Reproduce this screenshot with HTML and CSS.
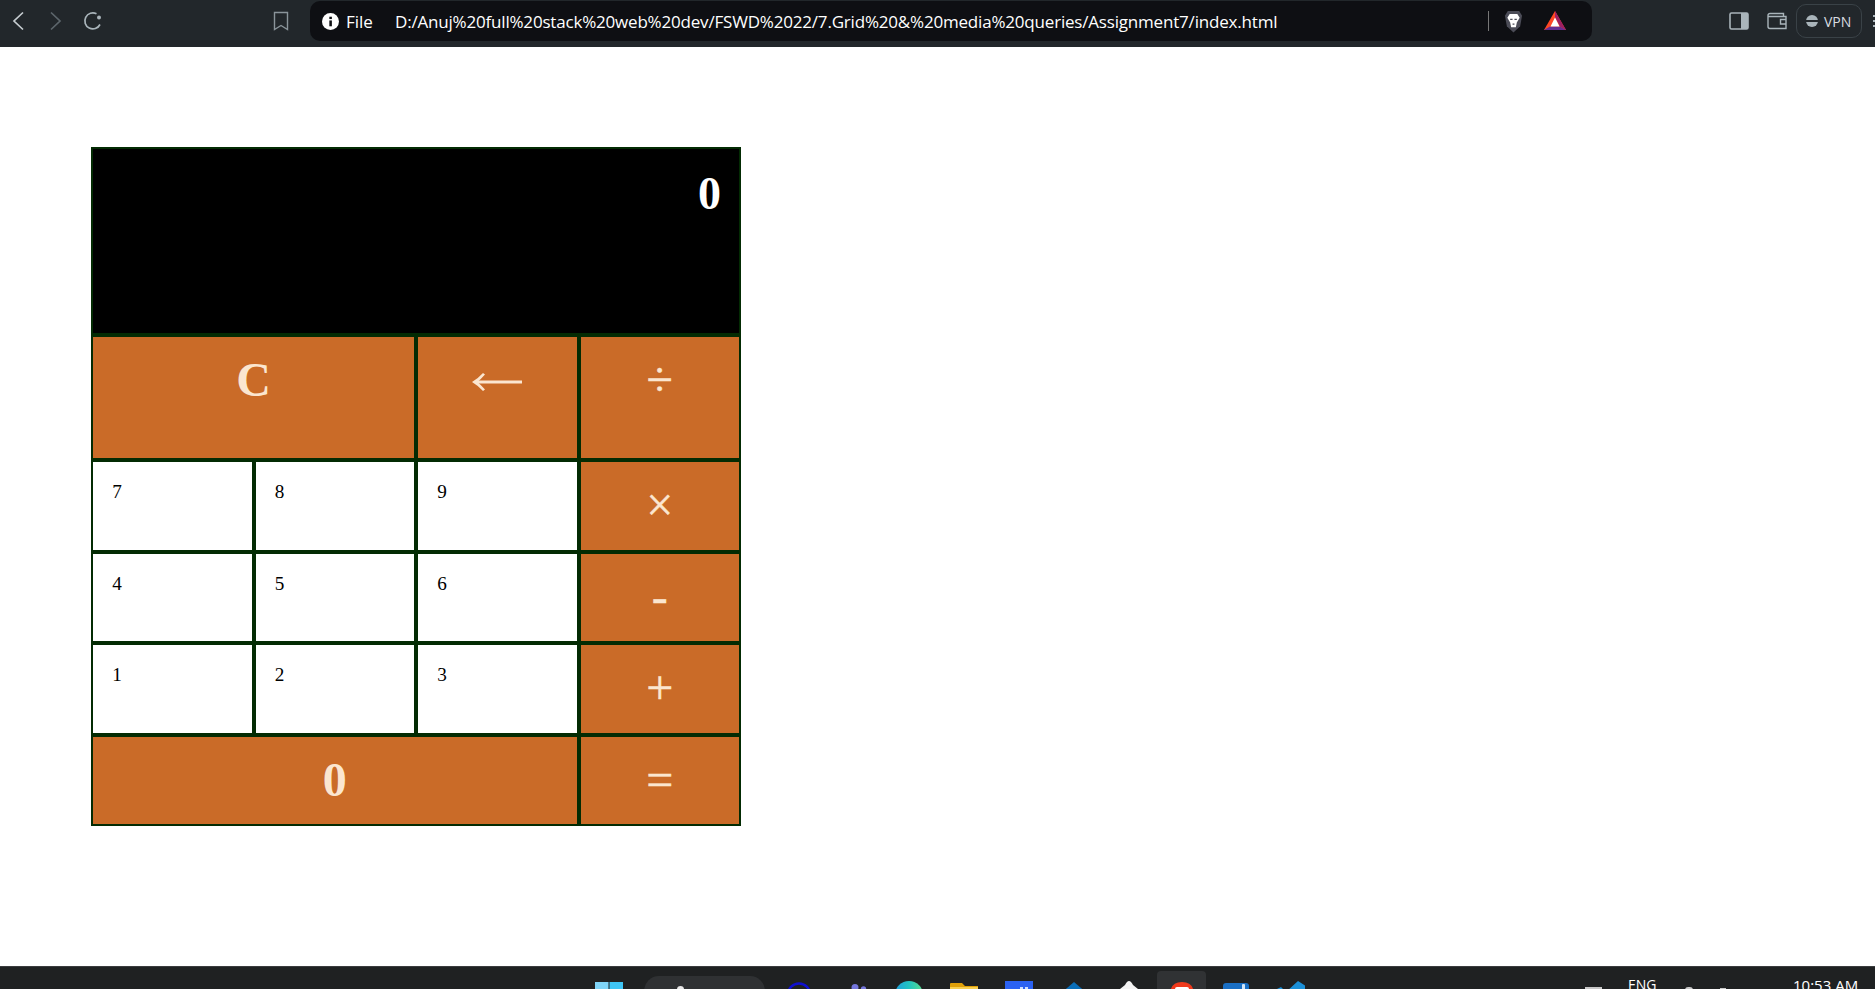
FILE: index.html
```html
<!DOCTYPE html>
<html lang="en">
<head>
  <meta charset="UTF-8">
  <title>Calculator</title>
  <link rel="stylesheet" href="styles.css">
</head>
<body>
  <header class="toolbar">
    <div class="nav-btns">
      <svg class="icon" viewBox="0 0 20 20"><path d="M14 1.500 L5 10 L14 18.500" class="stroke"/></svg>
      <svg class="icon dim" viewBox="0 0 20 20"><path d="M5 1.500 L14 10 L5 18.500" class="stroke"/></svg>
      <svg class="icon" viewBox="0 0 20 20"><path d="M17 13.500 A8 8 0 1 1 13.500 2.800" class="stroke soft"/><circle cx="16" cy="6.500" r="2" fill="#a9b4ba"/></svg>
    </div>
    <svg class="icon bookmark" viewBox="0 0 20 20"><path d="M3.500 1.500 H16.500 V18.500 L10 14.500 L3.500 18.500 Z" class="stroke thin"/></svg>
    <div class="urlbar">
      <svg class="info" viewBox="0 0 16 16"><circle cx="8" cy="8" r="8" fill="#fff"/><rect x="6.900" y="7" width="2.400" height="5.500" fill="#0e0f13"/><rect x="6.900" y="3.500" width="2.400" height="2.200" fill="#0e0f13"/></svg>
      <span class="scheme">File</span>
      <span class="url">D:/Anuj%20full%20stack%20web%20dev/FSWD%2022/7.Grid%20&amp;%20media%20queries/Assignment7/index.html</span>
      <span class="url-sep"></span>
      <svg class="shield" viewBox="0 0 20 24"><path d="M4 1 H16 L19 6 L17 17 L10 23.500 L3 17 L1 6 Z" fill="#4b4c57"/><path d="M6 4 H14 L16.500 8 L13.500 13 L12.500 18 H7.500 L6.500 13 L3.500 8 Z" fill="#fff"/><path d="M6.500 9 H9 V10.500 H6.500 Z M11 9 H13.500 V10.500 H11 Z M9 14 H11 V15.500 H9 Z" fill="#4b4c57"/></svg>
      <svg class="bat" viewBox="0 0 22 20"><path d="M11 0 L22 19 H0 Z" fill="#ff4724"/><path d="M11 0 L22 19 L16 15.500 L11 6 Z" fill="#9e1f63"/><path d="M0 19 L6 15.500 H16 L22 19 Z" fill="#662d91"/><path d="M11 6.500 L15.500 15.500 H6.500 Z" fill="#fff"/></svg>
    </div>
    <div class="tools">
      <svg class="icon panel" viewBox="0 0 20 20"><rect x="1" y="2" width="18" height="16" rx="1.500" fill="none" stroke="#a9b4ba" stroke-width="1.600"/><rect x="12" y="2" width="7" height="16" fill="#a9b4ba"/></svg>
      <svg class="icon wallet" viewBox="0 0 20 20"><path d="M16.500 5.500 V2.500 H3 A2 2 0 0 0 1 4.500 V15.500 A2 2 0 0 0 3 17.500 H19 V5.500 H1.500" class="stroke thin grey"/><path d="M19 8.500 H13.500 V13 H19" class="stroke thin grey"/></svg>
      <div class="vpn"><span class="vpn-dot"></span>VPN</div>
      <svg class="kebab" viewBox="0 0 2 12"><rect y="0" width="2" height="2" fill="#a9b4ba"/><rect y="5" width="2" height="2" fill="#a9b4ba"/><rect y="10" width="2" height="2" fill="#a9b4ba"/></svg>
    </div>
  </header>

  <main class="page">
    <div class="calculator">
      <div class="display">0</div>
      <div class="key op span-2 strong">C</div>
      <div class="key op" aria-label="backspace">
        <svg class="arrow" viewBox="0 0 50 18"><path d="M3 7.400 H50 V10.600 H3 Z"/><path d="M11 0 L13 1.500 Q9 6 5.500 9 Q9 12 13 16.500 L11 18 Q6 12.500 0 9 Q6 5.500 11 0 Z"/></svg>
      </div>
      <div class="key op">&divide;</div>
      <div class="key">7</div>
      <div class="key">8</div>
      <div class="key">9</div>
      <div class="key op">&times;</div>
      <div class="key">4</div>
      <div class="key">5</div>
      <div class="key">6</div>
      <div class="key op">-</div>
      <div class="key">1</div>
      <div class="key">2</div>
      <div class="key">3</div>
      <div class="key op">+</div>
      <div class="key op span-3 strong">0</div>
      <div class="key op">=</div>
    </div>
  </main>

  <footer class="taskbar">
    <div class="task-icons">
      <svg class="task" viewBox="0 0 28 28"><rect x="0" y="1" width="13.500" height="14" fill="#7fd4f7"/><rect x="14.500" y="1" width="13.500" height="14" fill="#3ec5f5"/></svg>
      <div class="search"><span class="lens"></span></div>
      <svg class="task" viewBox="0 0 28 28"><circle cx="14" cy="13.500" r="11" fill="none" stroke="#1010d0" stroke-width="2.500"/></svg>
      <svg class="task" viewBox="0 0 28 28"><circle cx="15" cy="6.500" r="3.500" fill="#7476dc"/><circle cx="23.500" cy="8" r="2.700" fill="#7476dc"/></svg>
      <svg class="task" viewBox="0 0 28 28">
        <defs><linearGradient id="edge" x1="0" x2="1" y1="0" y2="0"><stop offset="0" stop-color="#1f9fdc"/><stop offset="0.500" stop-color="#22c3c0"/><stop offset="1" stop-color="#59dd8e"/></linearGradient></defs>
        <circle cx="14" cy="14" r="14" fill="url(#edge)"/>
      </svg>
      <svg class="task" viewBox="0 0 28 28"><path d="M0 3 Q0 2 1 2 H12 L15 5 H28 V28 H0 Z" fill="#e0a008"/><rect x="0" y="6" width="28" height="22" fill="#f8cf50"/></svg>
      <svg class="task" viewBox="0 0 28 28"><rect width="28" height="28" fill="#2b62f2"/><rect x="15" y="6" width="3" height="3" fill="#cfe0ff"/><rect x="20" y="6" width="3" height="3" fill="#cfe0ff"/></svg>
      <svg class="task" viewBox="0 0 28 28"><path d="M14 1 L28 13 H0 Z" fill="#0a6eb8"/></svg>
      <svg class="task" viewBox="0 0 28 28"><path d="M14 0 Q16 0 18 4 L28 12 H0 L10 4 Q12 0 14 0 Z" fill="#f4f4f4"/></svg>
      <div class="task-active"><svg class="task" viewBox="0 0 28 28"><path d="M2 14 Q2 1 14 1 Q26 1 26 14 Z" fill="#f03a1c"/><rect x="7" y="6" width="14" height="8" rx="2" fill="#fff"/></svg></div>
      <svg class="task" viewBox="0 0 28 28"><rect x="1" y="2" width="26" height="26" rx="3" fill="#1a6fc4"/><rect x="20" y="3" width="3" height="6" rx="1" fill="#d4e6f8"/></svg>
      <svg class="task" viewBox="0 0 28 28"><path d="M21 0 L29 5 V28 H0 V8 L4 6 L9 11 Z" fill="#1b90d8"/></svg>
    </div>
    <div class="tray">
      <span class="tray-bit wide"></span>
      <span class="lang">ENG</span>
      <span class="tray-bit mid"></span>
      <span class="tray-bit small"></span>
      <span class="clock">10:53 AM</span>
    </div>
  </footer>
</body>
</html>
```

FILE: styles.css
```css
* { box-sizing: border-box; }
html, body { height: 100%; }
body { margin: 0; display: flex; flex-direction: column; height: 100vh; overflow: hidden; background: #fff; font-family: "Liberation Serif", serif; }

.toolbar { height: 47px; flex: none; display: flex; align-items: center; padding-bottom: 5px; background: #22272b; font-family: "Open Sans", "Liberation Sans", sans-serif; color: #fff; }
.nav-btns { display: flex; gap: 17px; padding-left: 9px; width: 271px; }
.icon { width: 20px; height: 20px; flex: none; }
.stroke { fill: none; stroke: #c6ccd0; stroke-width: 1.7; }
.dim .stroke { stroke: #5d666c; }
.soft { stroke: #a9b4ba; }
.thin { stroke-width: 1.4; stroke: #8a949a; }
.grey { stroke: #a9b4ba; }
.bookmark { margin-right: 19px; }
.urlbar { width: 1282px; height: 40px; flex: none; display: flex; align-items: center; padding-left: 12px; background: #0e0f13; border-radius: 10px; font-size: 17px; white-space: nowrap; }
.info { width: 17px; height: 17px; margin-right: 7px; flex: none; }
.scheme { width: 25px; margin-right: 24px; flex: none; }
.url { width: 1093px; flex: none; letter-spacing: -0.19px; }
.url-sep { width: 1px; height: 20px; flex: none; background: #777; }
.shield { width: 19px; height: 23px; margin-left: 15px; flex: none; }
.bat { width: 22px; height: 20px; margin-left: 21px; flex: none; }
.tools { display: flex; align-items: center; margin-left: 137px; }
.panel { margin-right: 18px; }
.wallet { margin-right: 9px; }
.vpn { width: 66px; height: 34px; flex: none; display: flex; align-items: center; gap: 6px; padding-left: 9px; border: 1px solid #3a4247; border-radius: 10px; font-size: 14px; color: #d8dde0; }
.vpn-dot { width: 12px; height: 12px; border-radius: 50%; background: linear-gradient(#a9b4ba 0 42%, #22272b 42% 58%, #a9b4ba 58%); }
.kebab { width: 2px; height: 12px; margin-left: 11px; flex: none; }

.page { flex: 1; padding: 100px 0 0 91px; }
.calculator { width: 650px; padding: 2px; display: grid; gap: 4px; grid-template-columns: repeat(4, 1fr); grid-template-rows: 184px 121px repeat(4, 87.5px); background: #032b03; }
.display { grid-column: span 4; padding: 18px 18px; background: #000; color: #fff; font-size: 46px; font-weight: bold; text-align: right; }
.key { padding: 1em; background: #fff; color: #000; font-size: 19.2px; }
.op { background: #ca6b28; color: #fbe6d0; font-size: 48px; text-align: center; padding: 19px 0 0; line-height: 1; -webkit-text-stroke: 0.4px #fbe6d0; }
.strong { font-weight: bold; -webkit-text-stroke: 0; }
.span-2 { grid-column: span 2; }
.span-3 { grid-column: span 3; }
.arrow { display: block; width: 50px; height: 18px; margin: 17px auto 0; fill: #fbe6d0; }

.taskbar { height: 23px; flex: none; display: flex; overflow: hidden; background: #1f2122; border-top: 1px solid #3a3c3e; font-family: "Open Sans", "Liberation Sans", sans-serif; color: #fff; }
.task-icons { display: flex; gap: 27px; padding: 14px 0 0 595px; }
.task { width: 28px; height: 28px; flex: none; display: block; }
.search { width: 121px; height: 30px; margin: -5px -7px 0 -6px; padding: 10px 0 0 33px; background: #2f3133; border-radius: 15px; }
.lens { display: block; width: 7px; height: 7px; border-radius: 50%; background: #e8e8e8; }
.task-active { width: 49px; height: 30px; margin: -10px -11px 0 -13px; padding: 10px 0 0 11px; background: #303234; border-radius: 4px; }
.tray { margin-left: auto; display: flex; padding: 8px 18px 0 0; font-size: 14px; line-height: 20px; }
.tray-bit { height: 3px; margin-top: 12px; background: #c8c8c8; }
.wide { width: 17px; margin-right: 26px; }
.mid { width: 8px; margin-left: 29px; border-radius: 4px 4px 0 0; }
.small { width: 6px; margin: 13px 67px 0 27px; height: 2px; }
.lang { width: 28px; }
.clock { width: 64px; font-size: 15px; white-space: nowrap; }
```
